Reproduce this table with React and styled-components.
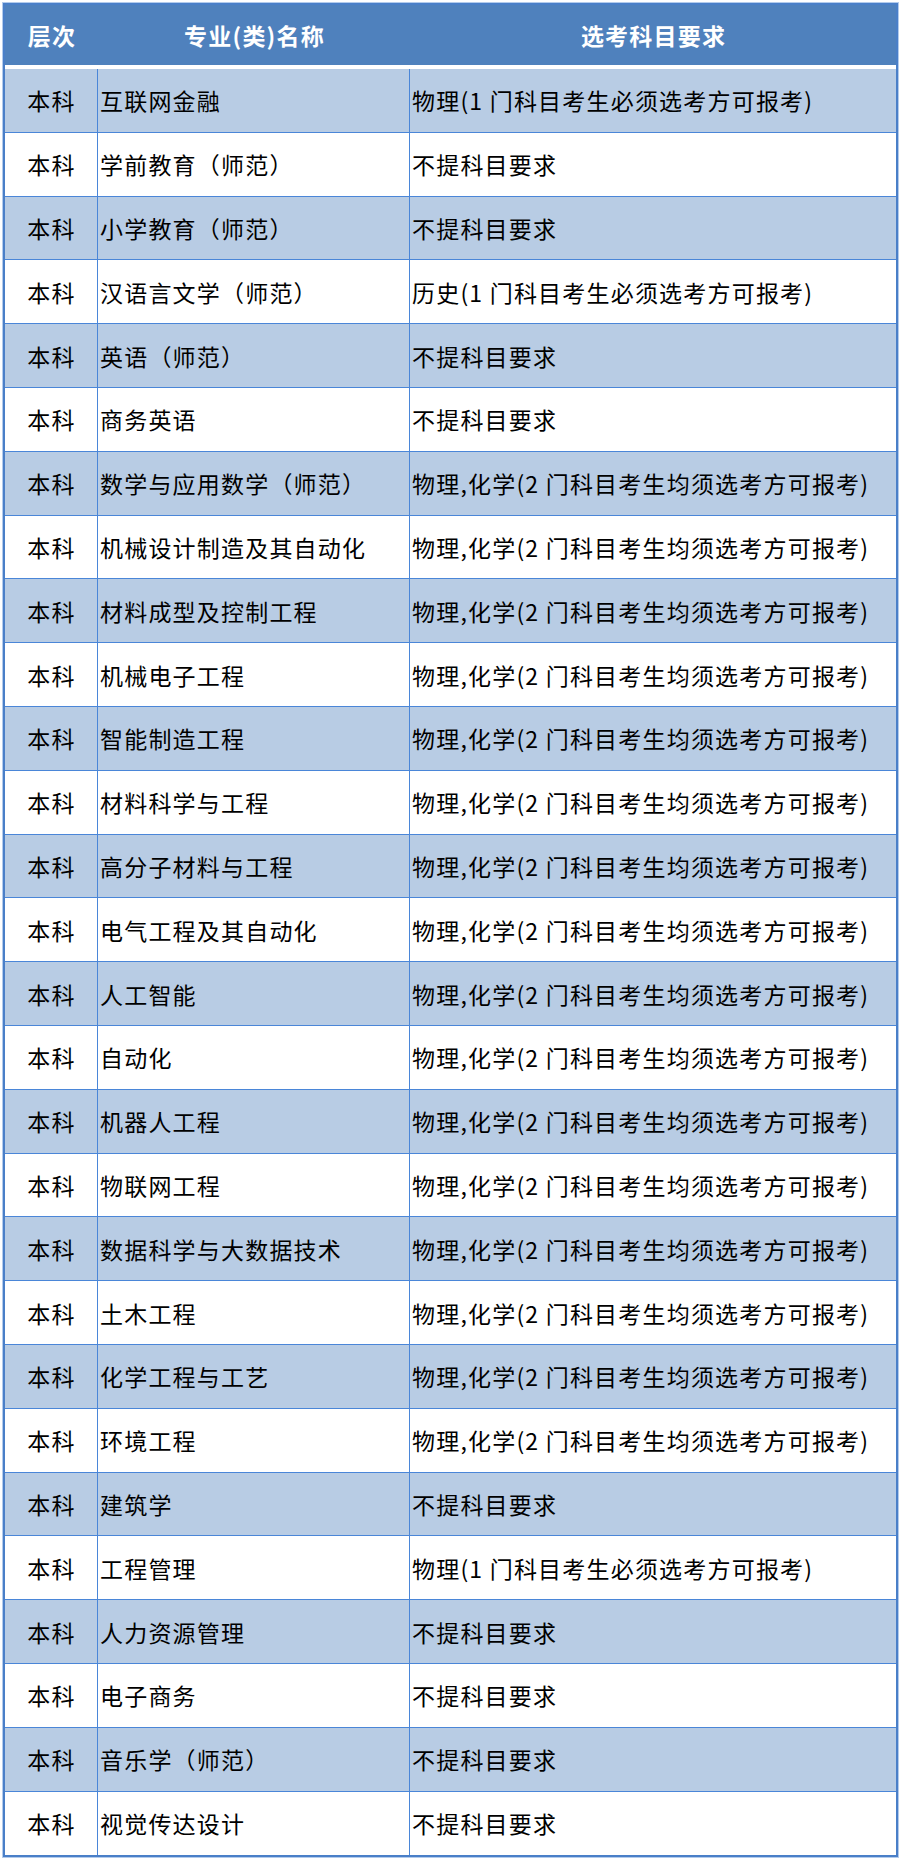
import styled, { createGlobalStyle } from "styled-components";

const GlobalStyle = createGlobalStyle`
  html, body {
    margin: 0;
    padding: 0;
    background: #ffffff;
  }
  body {
    font-family: "Microsoft YaHei", "Noto Sans CJK SC", "Noto Sans", sans-serif;
  }
`;

const ONE = "物理(1 门科目考生必须选考方可报考)";
const TWO = "物理,化学(2 门科目考生均须选考方可报考)";
const NONE = "不提科目要求";

const majors = [
  ["互联网金融", ONE],
  ["学前教育（师范）", NONE],
  ["小学教育（师范）", NONE],
  ["汉语言文学（师范）", "历史(1 门科目考生必须选考方可报考)"],
  ["英语（师范）", NONE],
  ["商务英语", NONE],
  ["数学与应用数学（师范）", TWO],
  ["机械设计制造及其自动化", TWO],
  ["材料成型及控制工程", TWO],
  ["机械电子工程", TWO],
  ["智能制造工程", TWO],
  ["材料科学与工程", TWO],
  ["高分子材料与工程", TWO],
  ["电气工程及其自动化", TWO],
  ["人工智能", TWO],
  ["自动化", TWO],
  ["机器人工程", TWO],
  ["物联网工程", TWO],
  ["数据科学与大数据技术", TWO],
  ["土木工程", TWO],
  ["化学工程与工艺", TWO],
  ["环境工程", TWO],
  ["建筑学", NONE],
  ["工程管理", ONE],
  ["人力资源管理", NONE],
  ["电子商务", NONE],
  ["音乐学（师范）", NONE],
  ["视觉传达设计", NONE],
];

const Sheet = styled.div`
  padding: 3px 2px 2px 3px;
`;

// outer frame of the table
const Table = styled.div`
  border: 2px solid #4a7fc8;
  box-shadow: 0 0 0 1px #b3cbec;
`;

const HeadRow = styled.div`
  display: grid;
  grid-template-columns: 93px 312px 1fr;
  height: 60px;
  background: #4f81bd;
  border-bottom: 4px solid #ffffff;
`;

const HeadCell = styled.div`
  display: flex;
  align-items: center;
  justify-content: center;
  padding-left: 1px;
  color: #ffffff;
  font-size: 23px;
  font-weight: 700;
  letter-spacing: 1.2px;
`;

const Row = styled.div`
  display: grid;
  grid-template-columns: 93px 312px 1fr;
  height: 63.8px;
  box-sizing: border-box;
  background: ${(p) => (p.$band ? "#b8cce4" : "#ffffff")};
  border-bottom: 1px solid #4a86d8;

  &:last-child {
    border-bottom: none;
  }
`;

const Cell = styled.div`
  display: flex;
  align-items: center;
  justify-content: ${(p) => (p.$center ? "center" : "flex-start")};
  padding-left: ${(p) => (p.$center ? "1px" : "2px")};
  border-right: ${(p) => (p.$last ? "none" : "1px solid #4a86d8")};
  color: #000000;
  font-size: 23px;
  letter-spacing: 1.2px;
  white-space: nowrap;
`;

export default function App() {
  return (
    <>
      <GlobalStyle />
      <Sheet>
        <Table>
          <HeadRow>
            <HeadCell>层次</HeadCell>
            <HeadCell>专业(类)名称</HeadCell>
            <HeadCell>选考科目要求</HeadCell>
          </HeadRow>
          {majors.map(([name, req], i) => (
            <Row key={name} $band={i % 2 === 0}>
              <Cell $center>本科</Cell>
              <Cell>{name}</Cell>
              <Cell $last>{req}</Cell>
            </Row>
          ))}
        </Table>
      </Sheet>
    </>
  );
}
